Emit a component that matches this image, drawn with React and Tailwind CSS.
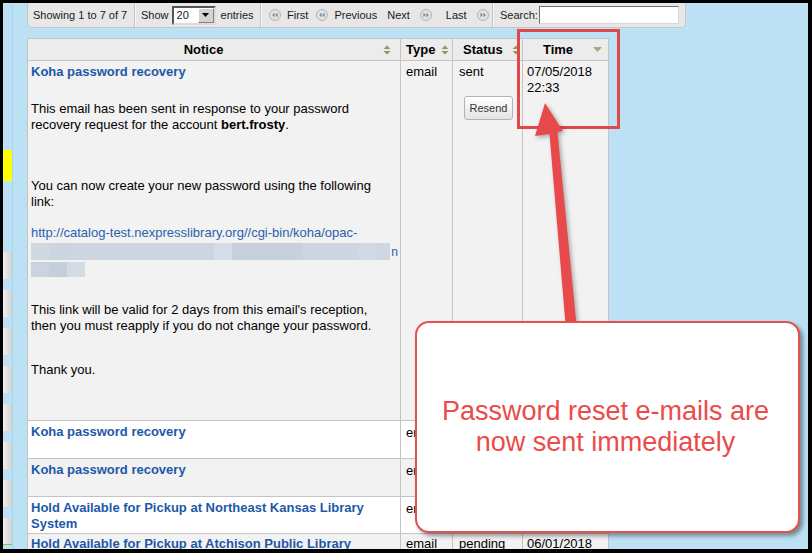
import React from "react";

const FONT = { fontFamily: '"Liberation Sans", Arial, sans-serif' };

function PgIcon({ dir }) {
  return (
    <svg width="12" height="12" viewBox="0 0 12 12" className="shrink-0">
      <circle cx="6" cy="6" r="5.5" fill="#e2e2e2" stroke="#b2b2b2" />
      {dir === "l" ? (
        <path d="M5.6 3.6 L3.2 6 L5.6 8.4Z M8.6 3.6 L6.2 6 L8.6 8.4Z" fill="#8a8a8a" />
      ) : (
        <path d="M3.4 3.6 L5.8 6 L3.4 8.4Z M6.4 3.6 L8.8 6 L6.4 8.4Z" fill="#8a8a8a" />
      )}
    </svg>
  );
}

function SortIcon() {
  return (
    <svg width="8" height="10" viewBox="0 0 8 10" className="shrink-0">
      <path d="M4 0.5 L7.5 4 H0.5Z M0.5 6 H7.5 L4 9.5Z" fill="#8d9a58" />
    </svg>
  );
}

function Divider() {
  return <div className="w-px self-stretch bg-[#c3c3c3] shadow-[1px_0_0_#f8f8f8]" />;
}

function Toolbar() {
  return (
    <div className="h-[25px] w-[659px] bg-[#e7e7e7] border-l border-r border-b border-[#c6c6c6] rounded-b-[5px] flex items-stretch text-[11px] text-[#1a1a1a] shrink-0">
      <div className="w-[106px] flex items-center pl-[5px]">Showing 1 to 7 of 7</div>
      <Divider />
      <div className="w-[125px] flex items-center pl-[6px]">
        <span>Show</span>
        <div className="ml-[3px] w-[44px] h-[19px] border-2 border-t-[#555] border-l-[#555] border-r-[#dcdcdc] border-b-[#dcdcdc] bg-white flex items-center">
          <span className="flex-1 pl-[3px] text-[11px]">20</span>
          <div className="w-[16px] h-full bg-[#d6d3cc] border border-t-white border-l-white border-r-[#808080] border-b-[#808080] flex items-center justify-center">
            <svg width="7" height="4" viewBox="0 0 7 4"><path d="M0 0H7L3.5 4Z" fill="#000" /></svg>
          </div>
        </div>
        <span className="ml-[5px]">entries</span>
      </div>
      <Divider />
      <div className="w-[231px] flex items-center pl-[8px]">
        <PgIcon dir="l" />
        <span className="ml-[6px]">First</span>
        <span className="ml-[8px]"><PgIcon dir="l" /></span>
        <span className="ml-[6px]">Previous</span>
        <span className="ml-[10px]">Next</span>
        <span className="ml-[10px]"><PgIcon dir="r" /></span>
        <span className="ml-[14px]">Last</span>
        <span className="ml-[10px]"><PgIcon dir="r" /></span>
      </div>
      <Divider />
      <div className="flex-1 flex items-center pl-[7px]">
        <span>Search:</span>
        <div className="ml-[1px] w-[140px] h-[18px] bg-white border border-t-[#6d6d6d] border-l-[#6d6d6d] border-r-[#d8d8d8] border-b-[#d8d8d8]" />
      </div>
    </div>
  );
}

function Blur() {
  const l2 = [
    [18, "#d0d8e2"], [24, "#cbd4df"], [72, "#cdd6e1"], [70, "#ccd5e0"], [18, "#d6dde6"],
    [72, "#c6d1dd"], [56, "#cdd6e1"], [18, "#d2dae3"], [14, "#cfd8e2"],
  ];
  const l3 = [[18, "#cad3df"], [18, "#c5cfdc"], [18, "#d3dbe5"]];
  return (
    <div>
      <div className="mt-[2px] flex items-center h-[17px]">
        {l2.map(([w, c], i) => (
          <div key={i} className="h-full" style={{ width: w, background: c }} />
        ))}
        <span className="text-[#2b5fae] text-[12px] leading-[16px] ml-[1px]">n</span>
      </div>
      <div className="mt-[2px] flex h-[15px]">
        {l3.map(([w, c], i) => (
          <div key={i} className="h-full" style={{ width: w, background: c }} />
        ))}
      </div>
    </div>
  );
}

const td = "border border-[#c4c4c4] align-top text-[13px] leading-[16px] text-black";
const title = "text-[13px] leading-[16px] font-bold text-[#1d58a8]";

function DataTable() {
  return (
    <table className="mt-[10px] border-collapse table-fixed w-[581px] shrink-0">
      <colgroup>
        <col className="w-[373px]" />
        <col className="w-[52px]" />
        <col className="w-[70px]" />
        <col className="w-[86px]" />
      </colgroup>
      <thead>
        <tr className="h-[22px] bg-[#ececec] text-[13px] font-bold text-black">
          <th className="border border-[#c4c4c4] p-0">
            <div className="flex items-center pl-[4px] pr-[9px]">
              <span className="flex-1 text-center pr-[8px]">Notice</span>
              <SortIcon />
            </div>
          </th>
          <th className="border border-[#c4c4c4] p-0">
            <div className="flex items-center pl-[5px] pr-[3px]">
              <span className="flex-1 text-left">Type</span>
              <SortIcon />
            </div>
          </th>
          <th className="border border-[#c4c4c4] p-0">
            <div className="flex items-center pl-[10px] pr-[2px]">
              <span className="flex-1 text-left">Status</span>
              <SortIcon />
            </div>
          </th>
          <th className="border border-[#c4c4c4] p-0">
            <div className="flex items-center pl-[4px] pr-[6px]">
              <span className="flex-1 text-center pr-[4px]">Time</span>
              <svg width="9" height="5" viewBox="0 0 9 5"><path d="M0 0H9L4.5 5Z" fill="#a9a97c" /></svg>
            </div>
          </th>
        </tr>
      </thead>
      <tbody>
        <tr className="h-[360px] bg-[#f2f2f2]">
          <td className={`${td} pl-[3px] pr-[2px] pt-[3px]`}>
            <div className={title}>Koha password recovery</div>
            <div className="mt-[21px]">
              This email has been sent in response to your password
              <br />
              recovery request for the account <b>bert.frosty</b>.
            </div>
            <div className="mt-[45px]">
              You can now create your new password using the following
              <br />
              link:
            </div>
            <div className="mt-[15px] text-[#2b5fae] whitespace-nowrap">http://catalog-test.nexpresslibrary.org//cgi-bin/koha/opac-</div>
            <Blur />
            <div className="mt-[25px]">
              This link will be valid for 2 days from this email's reception,
              <br />
              then you must reapply if you do not change your password.
            </div>
            <div className="mt-[28px]">Thank you.</div>
          </td>
          <td className={`${td} pl-[5px] pt-[3px]`}>email</td>
          <td className={`${td} pl-[6px] pt-[3px]`}>
            <div>sent</div>
            <div className="mt-[16px] flex justify-center pr-[4px]">
              <div className="w-[49px] h-[24px] rounded-[3px] border border-[#b4b4b4] bg-gradient-to-b from-white to-[#e4e4e4] text-[11px] flex items-center justify-center text-[#333]">
                Resend
              </div>
            </div>
          </td>
          <td className={`${td} pl-[4px] pt-[3px]`}>
            07/05/2018
            <br />
            22:33
          </td>
        </tr>
        <tr className="h-[38px] bg-white">
          <td className={`${td} pl-[3px] pt-[3px]`}><div className={title}>Koha password recovery</div></td>
          <td className={`${td} pl-[5px] pt-[4px]`}>email</td>
          <td className={td}></td>
          <td className={td}></td>
        </tr>
        <tr className="h-[38px] bg-[#f2f2f2]">
          <td className={`${td} pl-[3px] pt-[3px]`}><div className={title}>Koha password recovery</div></td>
          <td className={`${td} pl-[5px] pt-[4px]`}>email</td>
          <td className={td}></td>
          <td className={td}></td>
        </tr>
        <tr className="h-[37px] bg-white">
          <td className={`${td} pl-[3px] pt-[3px]`}>
            <div className={title}>
              Hold Available for Pickup at Northeast Kansas Library
              <br />
              System
            </div>
          </td>
          <td className={`${td} pl-[5px] pt-[4px]`}>email</td>
          <td className={td}></td>
          <td className={td}></td>
        </tr>
        <tr className="h-[37px] bg-[#f2f2f2]">
          <td className={`${td} pl-[3px] pt-[2px]`}><div className={title}>Hold Available for Pickup at Atchison Public Library</div></td>
          <td className={`${td} pl-[5px] pt-[2px]`}>email</td>
          <td className={`${td} pl-[6px] pt-[2px]`}>pending</td>
          <td className={`${td} pl-[4px] pt-[2px]`}>06/01/2018</td>
        </tr>
      </tbody>
    </table>
  );
}

function Sidebar() {
  const tops = [249, 287, 325, 363, 401, 439, 477, 515];
  return (
    <div className="w-[9px] shrink-0 flex flex-col">
      <div className="mt-[147px] h-[31px] bg-[#ffff00]" />
      <div className="mt-[71px] flex flex-col gap-[11px]">
        {tops.map((t, i) => (
          <div
            key={t}
            className={`h-[27px] bg-gradient-to-r from-[#f0f0f0] to-[#d2d2d2] ${i === tops.length - 1 ? "border-b border-[#8cc63f]" : ""}`}
          />
        ))}
      </div>
    </div>
  );
}

export default function App() {
  return (
    <div className="relative w-[812px] h-[553px] bg-black pt-[3px] pl-[3px] pr-[4px] pb-[4px] overflow-hidden" style={FONT}>
      <div className="w-full h-full bg-[#bde1f4] flex overflow-hidden">
        <Sidebar />
        <div className="w-px shrink-0 bg-[#acd4ea]" />
        <div className="ml-[14px] flex flex-col">
          <Toolbar />
          <DataTable />
        </div>
      </div>

      {/* annotation: red highlight box */}
      <div className="absolute left-[517px] top-[29px] w-[103px] h-[100px] border-[3px] border-[#e0484a]" />

      {/* annotation: arrow */}
      <svg className="absolute left-0 top-0 drop-shadow-[2px_2px_2px_rgba(0,0,0,0.3)]" width="812" height="553" viewBox="0 0 812 553">
        <polygon points="545,103 563,131 557.5,132 577,330 566,330 549.5,134 535,136" fill="#e8494a" />
      </svg>

      {/* annotation: callout */}
      <div className="absolute left-[415px] top-[321px] w-[385px] h-[212px] rounded-[14px] border-2 border-[#e5514f] bg-white shadow-[3px_3px_4px_rgba(0,0,0,0.4)] flex items-center justify-center">
        <div className="text-center text-[27px] leading-[31px] text-[#ea4b4b] pr-[4px]">
          Password reset e-mails are
          <br />
          now sent immediately
        </div>
      </div>
    </div>
  );
}
